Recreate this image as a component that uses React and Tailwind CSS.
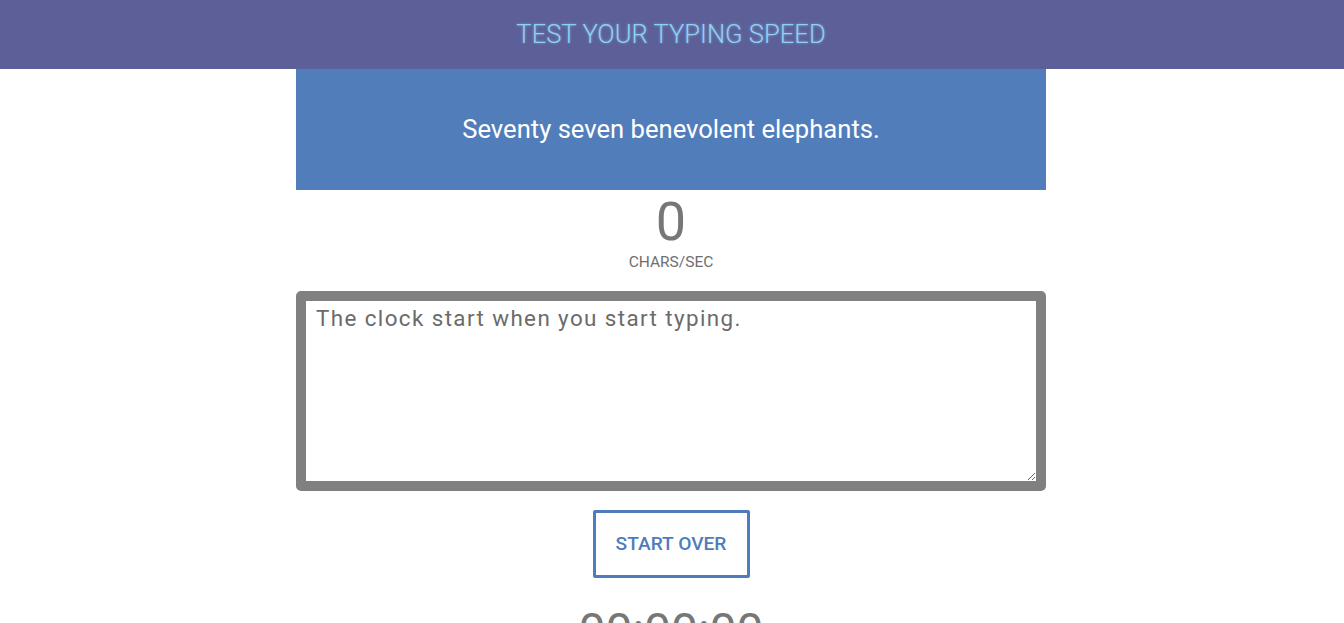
export default function App() {
  return (
    <div className="min-h-screen bg-white" style={{ fontFamily: "Roboto, 'Liberation Sans', sans-serif" }}>
      <header className="h-[69px] bg-[#5c5f98] flex items-center justify-center">
        <h1 className="text-[25.6px] font-light text-[#8fd0f5] [text-shadow:0_0_3px_rgba(143,208,245,0.6)] pr-[2px]">
          TEST YOUR TYPING SPEED
        </h1>
      </header>
      <div className="flex justify-center pr-[2px]">
        <div className="w-[750px] flex flex-col items-center">
          <div className="w-full h-[121px] bg-[#527dbb] flex items-center justify-center">
            <p className="text-[25.6px] text-white">Seventy seven benevolent elephants.</p>
          </div>
          <div className="mt-[3px] text-[54px] leading-[58px] text-[#777777] font-normal">0</div>
          <div className="text-[15.5px] leading-[18px] text-[#6f6f6f] mt-[2px]">CHARS/SEC</div>
          <textarea
            className="mt-[20px] w-full h-[200px] border-[10px] border-[#808080] rounded-[5px] px-[10px] py-[1px] text-[22.4px] tracking-[1.4px] text-[#6b6b6b] outline-none resize-y"
            defaultValue="The clock start when you start typing."
          />
          <button className="mt-[19px] w-[157px] h-[68px] border-[3px] border-[#4f7cbb] rounded-[2px] text-[19.2px] font-medium text-[#4f7cbb] bg-white">
            START OVER
          </button>
          <div className="mt-[24px] text-[48px] leading-[58px] text-[#777777]">00:00:00</div>
        </div>
      </div>
    </div>
  );
}
